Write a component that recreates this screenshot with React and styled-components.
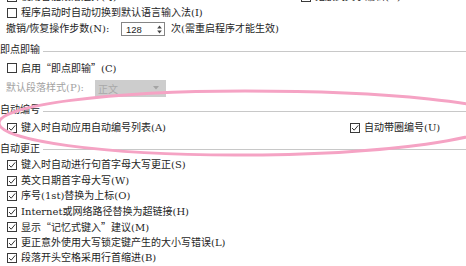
import React from 'react';
import styled, { createGlobalStyle } from 'styled-components';

const Global = createGlobalStyle`
  html, body { margin: 0; padding: 0; background: #ffffff; overflow: hidden; }
  body {
    width: 466px; height: 266px;
    font-family: "DejaVu Serif", "Noto Sans CJK SC", serif;
    font-size: 10px;
    color: #1e1e1e;
  }
`;

const Page = styled.div`
  position: relative;
  width: 466px;
  height: 266px;
  overflow: hidden;
`;

const Content = styled.div`
  display: flex;
  flex-direction: column;
  margin-top: -11.5px;
`;

const Row = styled.div`
  display: flex;
  align-items: center;
  height: ${p => p.$h || 15.5}px;
  margin-top: ${p => p.$mt || 0}px;
  padding-left: ${p => p.$pl ?? 7}px;
  white-space: nowrap;
`;

const Col = styled.div`
  display: flex;
  align-items: center;
  width: ${p => (p.$w ? `${p.$w}px` : 'auto')};
  flex: ${p => (p.$w ? 'none' : '1')};
`;

const Box = styled.span`
  box-sizing: border-box;
  width: 10px;
  height: 10px;
  border: 1px solid #3a3a3a;
  background: #fff;
  display: flex;
  align-items: center;
  justify-content: center;
  flex: none;
  margin-right: 4px;
`;

const Text = styled.span`
  line-height: 1;
  color: ${p => (p.$disabled ? '#a2a2a2' : '#1e1e1e')};
`;

const Quote = styled.span`
  font-family: "Noto Sans CJK SC", sans-serif;
`;

const Header = styled.div`
  display: flex;
  align-items: center;
  height: 16px;
  margin-top: ${p => p.$mt || 0}px;
  gap: 3px;
  white-space: nowrap;
`;

const Rule = styled.div`
  flex: 1;
  height: 1px;
  background: #c8c8c8;
  margin-top: 2px;
`;

const FixedLabel = styled.span`
  width: ${p => p.$w}px;
  flex: none;
  line-height: 1;
  color: ${p => (p.$disabled ? '#a2a2a2' : '#1e1e1e')};
`;

const Spin = styled.div`
  box-sizing: border-box;
  width: 44px;
  height: 14px;
  border: 1px solid #858585;
  display: flex;
  align-items: center;
  justify-content: space-between;
  padding: 0 2px 0 4px;
  font-family: "Liberation Sans", sans-serif;
  font-size: 9.5px;
  flex: none;
`;

const After = styled.span`
  margin-left: 6px;
  line-height: 1;
`;

const Select = styled.div`
  box-sizing: border-box;
  width: 71px;
  height: 17px;
  background: #cdcdcd;
  color: #a9a9a9;
  display: flex;
  align-items: center;
  justify-content: space-between;
  padding: 0 7px 0 3px;
  flex: none;
`;

const Overlay = styled.svg`
  position: absolute;
  left: 0;
  top: 0;
  pointer-events: none;
`;

const Check = ({ on }) => (
  <Box>
    {on && (
      <svg width="8" height="8" viewBox="0 0 8 8">
        <path d="M1 4 L3.2 6.2 L7.2 1.4" fill="none" stroke="#333" strokeWidth="1" />
      </svg>
    )}
  </Box>
);

const Item = ({ on, children }) => (
  <>
    <Check on={on} />
    <Text>{children}</Text>
  </>
);

const Section = ({ title, mt }) => (
  <Header $mt={mt}>
    <Text>{title}</Text>
    <Rule />
  </Header>
);

const autoCorrect = [
  '键入时自动进行句首字母大写更正(S)',
  '英文日期首字母大写(W)',
  '序号(1st)替换为上标(O)',
  'Internet或网络路径替换为超链接(H)',
  <>显示<Quote>“记忆式键入”</Quote>建议(M)</>,
  '更正意外使用大写锁定键产生的大小写错误(L)',
  '段落开头空格采用行首缩进(B)',
  '以Tab和Backspace设置左缩进和首行缩进(T)',
];

export default function App() {
  return (
    <Page>
      <Global />
      <Content>
        <Row $h={16}>
          <Col $w={294}>
            <Item>使用智能段落选择(Q)</Item>
          </Col>
          <Col>
            <Item>拖放式文字编辑(D)</Item>
          </Col>
        </Row>
        <Row $h={16}>
          <Item>程序启动时自动切换到默认语言输入法(I)</Item>
        </Row>
        <Row $h={17} $pl={6}>
          <FixedLabel $w={115}>撤销/恢复操作步数(N):</FixedLabel>
          <Spin>
            <span>128</span>
            <svg width="5" height="9" viewBox="0 0 5 9">
              <path d="M2.5 0.5 L4.8 3.4 L0.2 3.4 Z" fill="#444" />
              <path d="M0.2 5.6 L4.8 5.6 L2.5 8.5 Z" fill="#444" />
            </svg>
          </Spin>
          <After>次(需重启程序才能生效)</After>
        </Row>

        <Section title="即点即输" mt={4.5} />
        <Row $h={16} $mt={2}>
          <Item>启用<Quote>“即点即输”</Quote>(C)</Item>
        </Row>
        <Row $h={20} $mt={2} $pl={6}>
          <FixedLabel $w={89} $disabled>默认段落样式(P):</FixedLabel>
          <Select>
            <span>正文</span>
            <svg width="6" height="4" viewBox="0 0 6 4">
              <path d="M0 0 L6 0 L3 3.5 Z" fill="#a4a4a4" />
            </svg>
          </Select>
        </Row>

        <Section title="自动编号" mt={4} />
        <Row $h={16} $mt={2}>
          <Col $w={343}>
            <Item on>键入时自动应用自动编号列表(A)</Item>
          </Col>
          <Col>
            <Item on>自动带圈编号(U)</Item>
          </Col>
        </Row>

        <Section title="自动更正" mt={4.5} />
        <Row $h={16} $mt={0.5}>
          <Item on>{autoCorrect[0]}</Item>
        </Row>
        {autoCorrect.slice(1).map((t, i) => (
          <Row key={i}>
            <Item on>{t}</Item>
          </Row>
        ))}
      </Content>
      <Overlay width="466" height="266" viewBox="0 0 466 266">
        <path
          d="M-1 123 C-1 105.3 108.6 91 245 91 C388.6 91 505 103.1 505 118 C505 138.4 384.1 155 235 155 C104.1 155 -1 140.7 -1 123 Z"
          fill="none"
          stroke="#f5a3c4"
          strokeWidth="3"
        />
      </Overlay>
    </Page>
  );
}
